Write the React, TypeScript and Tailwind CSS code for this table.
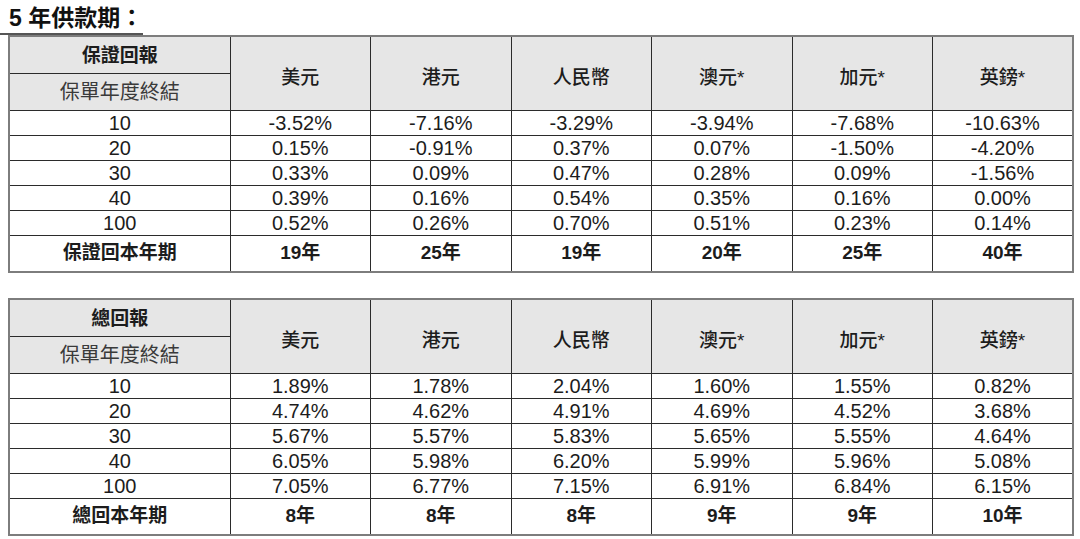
const currencies = ["美元", "港元", "人民幣", "澳元*", "加元*", "英鎊*"];

const guaranteed = {
  title: "保證回報",
  rows: [
    ["10", "-3.52%", "-7.16%", "-3.29%", "-3.94%", "-7.68%", "-10.63%"],
    ["20", "0.15%", "-0.91%", "0.37%", "0.07%", "-1.50%", "-4.20%"],
    ["30", "0.33%", "0.09%", "0.47%", "0.28%", "0.09%", "-1.56%"],
    ["40", "0.39%", "0.16%", "0.54%", "0.35%", "0.16%", "0.00%"],
    ["100", "0.52%", "0.26%", "0.70%", "0.51%", "0.23%", "0.14%"],
  ],
  footer: ["保證回本年期", "19年", "25年", "19年", "20年", "25年", "40年"],
};

const total = {
  title: "總回報",
  rows: [
    ["10", "1.89%", "1.78%", "2.04%", "1.60%", "1.55%", "0.82%"],
    ["20", "4.74%", "4.62%", "4.91%", "4.69%", "4.52%", "3.68%"],
    ["30", "5.67%", "5.57%", "5.83%", "5.65%", "5.55%", "4.64%"],
    ["40", "6.05%", "5.98%", "6.20%", "5.99%", "5.96%", "5.08%"],
    ["100", "7.05%", "6.77%", "7.15%", "6.91%", "6.84%", "6.15%"],
  ],
  footer: ["總回本年期", "8年", "8年", "8年", "9年", "9年", "10年"],
};

type Data = typeof guaranteed;

function ReturnTable({ data }: { data: Data }) {
  const cell = "border border-[#2b2b2b] text-center p-0";
  return (
    <table className="table-fixed border-collapse border-2 border-[#7d7d7d] w-[1064px] text-[#1c1c1c]">
      <colgroup>
        <col className="w-[221px]" />
        {currencies.map((c) => <col key={c} className="w-[140.5px]" />)}
      </colgroup>
      <thead>
        <tr className="h-[37px] bg-[#e6e6e6]">
          <th className={`${cell} text-[19px] font-bold pt-[2px]`}>{data.title}</th>
          {currencies.map((c) => (
            <th key={c} rowSpan={2} className={`${cell} text-[19px] font-medium pt-[10px]`}>{c}</th>
          ))}
        </tr>
        <tr className="h-[37px] bg-[#e6e6e6]">
          <th className={`${cell} text-[20px] font-normal text-[#3a3a3a]`}>保單年度終結</th>
        </tr>
      </thead>
      <tbody>
        {data.rows.map((r) => (
          <tr key={r[0]} className="h-[25px]">
            {r.map((v, i) => (
              <td key={i} className={`${cell} text-[20px] leading-none`}>{v}</td>
            ))}
          </tr>
        ))}
        <tr className="h-[37px]">
          {data.footer.map((v, i) => (
            <td key={i} className={`${cell} text-[19px] ${i === 0 ? "font-bold" : "font-semibold"}`}>{v}</td>
          ))}
        </tr>
      </tbody>
    </table>
  );
}

export default function App() {
  return (
    <div className="w-[1080px] h-[539px] bg-white overflow-hidden font-['Liberation_Sans','Noto_Sans_CJK_TC',sans-serif]">
      <div className="inline-block w-[143px] pl-[9px] pt-[4px] h-[35px] border-b-2 border-[#555] text-[23px] font-bold leading-[29px] text-[#111] whitespace-nowrap">
        5 年供款期：
      </div>
      <div className="pl-[8px] flex flex-col gap-[25px]">
        <ReturnTable data={guaranteed} />
        <ReturnTable data={total} />
      </div>
    </div>
  );
}
